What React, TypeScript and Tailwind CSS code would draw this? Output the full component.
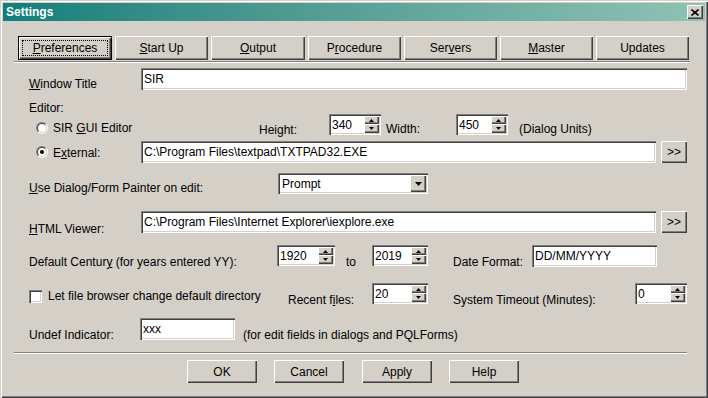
import type { ReactNode } from "react";

const RAISED =
  "shadow-[inset_1px_1px_#ffffff,inset_-1px_-1px_#404040,inset_-2px_-2px_#808080]";
const SUNKEN =
  "shadow-[inset_1px_1px_#808080,inset_2px_2px_#404040,inset_-1px_-1px_#ffffff,inset_-2px_-2px_#d4d0c8]";

function K({ children }: { children: ReactNode }) {
  return <u className="underline">{children}</u>;
}

function Btn({ className = "", children }: { className?: string; children?: ReactNode }) {
  return (
    <div className={`flex shrink-0 items-center justify-center bg-[#d4d0c8] ${RAISED} ${className}`}>
      {children}
    </div>
  );
}

function Field({ className = "", children }: { className?: string; children?: ReactNode }) {
  return (
    <div className={`flex shrink-0 items-center bg-white pl-[3px] ${SUNKEN} ${className}`}>
      <span className="whitespace-nowrap">{children}</span>
    </div>
  );
}

function Arrow({ up }: { up?: boolean }) {
  return (
    <svg width="5" height="3" viewBox="0 0 5 3">
      <polygon points={up ? "2.5,0 5,3 0,3" : "0,0 5,0 2.5,3"} fill="#000" />
    </svg>
  );
}

function Spin({ className = "", value }: { className?: string; value: string }) {
  return (
    <div className={`flex shrink-0 bg-white ${SUNKEN} ${className}`}>
      <div className="flex flex-1 items-center pl-[3px]">{value}</div>
      <div className="flex w-[17px] flex-col py-[2px] pr-[2px]">
        <Btn className="h-[8px] w-full">
          <Arrow up />
        </Btn>
        <Btn className="flex-1 w-full">
          <Arrow />
        </Btn>
      </div>
    </div>
  );
}

function Radio({ on }: { on?: boolean }) {
  return (
    <div className="size-[12px] shrink-0 rounded-full border border-t-[#808080] border-l-[#808080] border-r-white border-b-white">
      <div className="flex size-full items-center justify-center rounded-full border border-t-[#404040] border-l-[#404040] border-r-[#d4d0c8] border-b-[#d4d0c8] bg-white">
        {on && <div className="size-[4px] rounded-full bg-black" />}
      </div>
    </div>
  );
}

function Label({ className = "", children }: { className?: string; children: ReactNode }) {
  return <div className={`shrink-0 whitespace-nowrap ${className}`}>{children}</div>;
}

const tabs: { w: string; label: ReactNode }[] = [
  { w: "w-[93px]", label: <><K>S</K>tart Up</> },
  { w: "w-[94px]", label: <><K>O</K>utput</> },
  { w: "w-[93px]", label: <>P<K>r</K>ocedure</> },
  { w: "w-[93px]", label: <>Ser<K>v</K>ers</> },
  { w: "w-[93px]", label: <><K>M</K>aster</> },
  { w: "w-[93px]", label: <>Updates</> },
];

export default function App() {
  return (
    <div className="flex h-[398px] w-[708px] flex-col overflow-hidden bg-[#d4d0c8] p-[3px] font-['Liberation_Sans',Arial,sans-serif] text-[12px] leading-[14px] text-black shadow-[inset_1px_1px_#d4d0c8,inset_2px_2px_#ffffff,inset_-1px_-1px_#404040,inset_-2px_-2px_#808080]">
      {/* title bar */}
      <div className="flex h-[18px] shrink-0 items-center justify-between bg-linear-to-r from-[#0b7f7c] to-[#8fc3b3] pl-[3px] pr-[2px]">
        <span className="font-bold text-white">Settings</span>
        <Btn className="h-[14px] w-[16px]">
          <svg width="8" height="7" viewBox="0 0 8 7">
            <path d="M0.5 0.5L7.5 6.5M7.5 0.5L0.5 6.5" stroke="#000" strokeWidth="1.6" />
          </svg>
        </Btn>
      </div>

      {/* tab buttons */}
      <div className="mt-[15px] flex h-[24px] shrink-0 gap-[3px] pl-[15px]">
        <div className="h-[24px] w-[94px] shrink-0 border border-black">
          <div className={`size-full p-[3px] ${RAISED}`}>
            <div className="flex size-full items-center justify-center border border-dotted border-black">
              <span>
                <K>P</K>references
              </span>
            </div>
          </div>
        </div>
        {tabs.map((t, i) => (
          <Btn key={i} className={`h-[24px] ${t.w}`}>
            <span>{t.label}</span>
          </Btn>
        ))}
      </div>

      <div className="ml-[11px] mt-[1px] h-[2px] w-[676px] shrink-0 border-t border-b border-t-[#808080] border-b-white" />

      {/* window title */}
      <div className="mt-[5px] flex h-[22px] shrink-0 items-start pl-[26px]">
        <Label className="w-[112px] pt-[9px]">
          <K>W</K>indow Title
        </Label>
        <Field className="h-[22px] w-[546px]">SIR</Field>
      </div>

      {/* editor */}
      <div className="mt-[11px] h-[13px] shrink-0 pl-[26px]">Editor:</div>

      <div className="flex h-[21px] shrink-0 items-start">
        <div className="ml-[33px] mt-[8px]">
          <Radio />
        </div>
        <Label className="ml-[5px] w-[206px] pt-[7px]">
          SIR <K>G</K>UI Editor
        </Label>
        <Label className="w-[70px] pt-[9px]">Height:</Label>
        <Spin className="h-[21px] w-[52px]" value="340" />
        <Label className="ml-[5px] w-[70px] pt-[8px]">Width:</Label>
        <Spin className="h-[21px] w-[52px]" value="450" />
        <Label className="ml-[11px] pt-[8px]">(Dialog Units)</Label>
      </div>

      <div className="mt-[6px] flex h-[22px] shrink-0 items-start">
        <div className="ml-[33px] mt-[5px]">
          <Radio on />
        </div>
        <Label className="ml-[5px] w-[88px] pt-[5px]">
          E<K>x</K>ternal:
        </Label>
        <Field className="h-[22px] w-[515px]">C:\Program Files\textpad\TXTPAD32.EXE</Field>
        <Btn className="ml-[5px] h-[22px] w-[26px]">&gt;&gt;</Btn>
      </div>

      {/* painter */}
      <div className="mt-[10px] flex h-[21px] shrink-0 items-start pl-[26px]">
        <Label className="w-[249px] pt-[8px]">
          <K>U</K>se Dialog/Form Painter on edit:
        </Label>
        <div className={`flex h-[21px] w-[150px] shrink-0 bg-white p-[2px] ${SUNKEN}`}>
          <div className="flex flex-1 items-center pl-[2px]">Prompt</div>
          <Btn className="h-full w-[16px]">
            <svg width="7" height="4" viewBox="0 0 7 4">
              <polygon points="0,0 7,0 3.5,4" fill="#000" />
            </svg>
          </Btn>
        </div>
      </div>

      {/* html viewer */}
      <div className="mt-[17px] flex h-[22px] shrink-0 items-start pl-[26px]">
        <Label className="w-[112px] pt-[11px]">
          <K>H</K>TML Viewer:
        </Label>
        <Field className="h-[22px] w-[515px]">C:\Program Files\Internet Explorer\iexplore.exe</Field>
        <Btn className="ml-[5px] h-[22px] w-[26px]">&gt;&gt;</Btn>
      </div>

      {/* century */}
      <div className="mt-[12px] flex h-[22px] shrink-0 items-start pl-[26px]">
        <Label className="w-[248px] pt-[10px]">
          Default Centur<K>y</K> (for years entered YY):
        </Label>
        <Spin className="h-[21px] w-[58px]" value="1920" />
        <Label className="ml-[11px] w-[26px] pt-[10px]">to</Label>
        <Spin className="h-[21px] w-[56px]" value="2019" />
        <Label className="ml-[25px] w-[79px] pt-[10px]">Date Format:</Label>
        <Field className="h-[22px] w-[125px]">DD/MM/YYYY</Field>
      </div>

      {/* file browser */}
      <div className="mt-[16px] flex h-[21px] shrink-0 items-start">
        <div className={`ml-[26px] mt-[7px] size-[13px] shrink-0 bg-white ${SUNKEN}`} />
        <Label className="ml-[6px] w-[240px] pt-[6px]">Let file browser change default directory</Label>
        <Label className="w-[84px] pt-[10px]">
          Recent f<K>i</K>les:
        </Label>
        <Spin className="h-[21px] w-[56px]" value="20" />
        <Label className="ml-[25px] w-[182px] pt-[10px]">System Timeout (Minutes):</Label>
        <Spin className="h-[21px] w-[52px]" value="0" />
      </div>

      {/* undef */}
      <div className="mt-[14px] flex h-[22px] shrink-0 items-start pl-[26px]">
        <Label className="w-[111px] pt-[10px]">Undef Indicator:</Label>
        <Field className="h-[22px] w-[95px]">xxx</Field>
        <Label className="ml-[8px] pt-[10px]">(for edit fields in dialogs and PQLForms)</Label>
      </div>

      <div className="ml-[11px] mt-[12px] h-[2px] w-[673px] shrink-0 border-t border-b border-t-[#808080] border-b-white" />

      {/* dialog buttons */}
      <div className="mt-[6px] flex h-[23px] shrink-0 pl-[184px]">
        <Btn className="h-[23px] w-[70px]">OK</Btn>
        <Btn className="ml-[17px] h-[23px] w-[70px]">Cancel</Btn>
        <Btn className="ml-[18px] h-[23px] w-[70px]">Apply</Btn>
        <Btn className="ml-[17px] h-[23px] w-[70px]">Help</Btn>
      </div>
    </div>
  );
}
